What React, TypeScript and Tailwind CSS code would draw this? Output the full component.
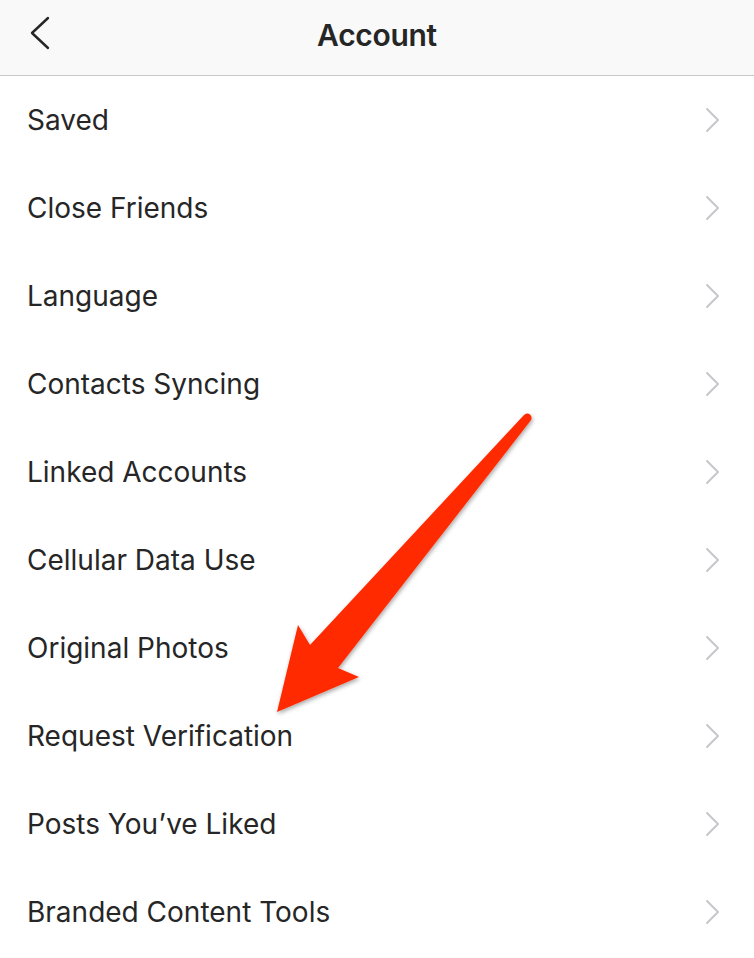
import React from "react";

const items = [
  "Saved",
  "Close Friends",
  "Language",
  "Contacts Syncing",
  "Linked Accounts",
  "Cellular Data Use",
  "Original Photos",
  "Request Verification",
  "Posts You’ve Liked",
  "Branded Content Tools",
];

function Chevron() {
  return (
    <svg width="16" height="26" viewBox="0 0 16 26" fill="none">
      <path d="M2 2 L13 13 L2 24" stroke="#c7c7cc" strokeWidth="2" strokeLinecap="round" strokeLinejoin="round" />
    </svg>
  );
}

export default function App() {
  return (
    <div className="relative w-[754px] h-[958px] overflow-hidden bg-white text-[#262626]" style={{ fontFamily: "Inter, 'Liberation Sans', sans-serif" }}>
      <header className="relative flex h-[76px] items-center justify-center border-b border-[#c8c8c8] bg-[#f9f9f9] pb-[6px]">
        <div className="absolute left-[28px] top-[16px]">
          <svg width="24" height="34" viewBox="0 0 24 34" fill="none">
            <path d="M20 2 L4 17 L20 32" stroke="#262626" strokeWidth="2.4" strokeLinecap="round" strokeLinejoin="round" />
          </svg>
        </div>
        <h1 className="text-[30px] font-semibold tracking-[-0.3px] leading-none">Account</h1>
      </header>
      <ul>
        {items.map((t) => (
          <li key={t} className="flex h-[88px] items-center justify-between pl-[27px] pr-[33px]">
            <span className="text-[28px] leading-none">{t}</span>
            <Chevron />
          </li>
        ))}
      </ul>
      <svg className="absolute left-0 top-0 pointer-events-none" width="754" height="958" viewBox="0 0 754 958">
        <defs>
          <filter id="sh" x="-20%" y="-20%" width="140%" height="140%">
            <feDropShadow dx="1" dy="2" stdDeviation="2" floodColor="#000" floodOpacity="0.35" />
          </filter>
        </defs>
        <path
          d="M524 415 A4.2 4.2 0 0 1 530.5 420.8 L338 668 L359 677 L277 712 L298 625 L310 645 Z"
          fill="#ff2a00"
          filter="url(#sh)"
        />
      </svg>
    </div>
  );
}
